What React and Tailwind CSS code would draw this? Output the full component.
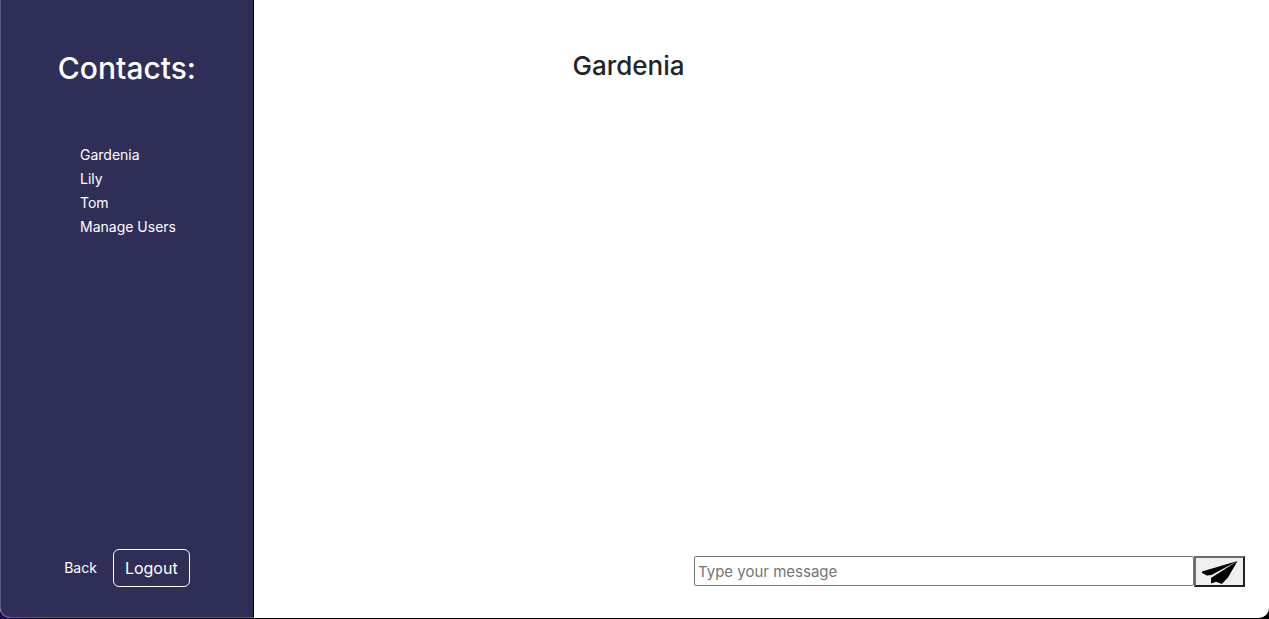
import React from "react";

const contacts = ["Gardenia", "Lily", "Tom", "Manage Users"];

function Sidebar() {
  return (
    <aside className="flex w-1/5 shrink-0 flex-col rounded-bl-[10px] border-r border-b border-l border-r-black border-b-[#5b5980] border-l-[#5b5980] bg-[#2f2e57] text-white">
      <h1 className="pt-12 text-center text-[30px] leading-10 font-medium">Contacts:</h1>
      <nav className="mt-[55px] pl-[79px]">
        <ul>
          {contacts.map((name) => (
            <li key={name} className="h-6 text-[14px] leading-6">
              <a href={"#" + name.toLowerCase().replace(" ", "-")}>{name}</a>
            </li>
          ))}
        </ul>
      </nav>
      <div className="mt-auto flex items-center justify-center gap-4 pb-[30px]">
        <a href="#back" className="text-[14px] leading-5">Back</a>
        <button type="button" className="h-[38px] rounded-md border border-white px-[11px] text-[16px] leading-6">
          Logout
        </button>
      </div>
    </aside>
  );
}

function MessageForm() {
  return (
    <form className="mt-auto flex items-start justify-end pr-6 pb-[31px]" onSubmit={(e) => e.preventDefault()}>
      <input
        type="text"
        aria-label="Message"
        placeholder="Type your message"
        className="h-[30px] w-[500px] rounded-xs border border-[#767676] bg-white px-[3px] text-[15px] placeholder:text-[#757575]"
      />
      <button
        type="submit"
        aria-label="Send"
        className="flex h-[31px] w-[51px] items-center justify-center border-2 border-t-[#6b6b6b] border-r-[#202020] border-b-[#202020] border-l-[#6b6b6b] bg-[#efefef]"
      >
        <svg viewBox="0 0 36 24" className="h-6 w-9" fill="#000" aria-hidden="true">
          <path d="M35.5 1L0 11.6V12.8L4.8 15.6L9.5 14.9Z" />
          <path d="M35.5 1L9 18V23.6L14.2 21.8L19.8 24L26 17.6Z" />
        </svg>
      </button>
    </form>
  );
}

export default function App() {
  return (
    <div className="h-screen bg-linear-to-r from-[#25005a] from-0% via-black via-5% to-black pb-px font-[Inter,sans-serif]">
      <div className="flex h-full overflow-hidden rounded-b-[10px] bg-white">
        <Sidebar />
        <main className="flex min-w-0 flex-1 flex-col">
          <h2 className="w-3/4 pt-12 pr-3 text-center text-[26px] leading-9 font-medium text-[#212529]">Gardenia</h2>
          <MessageForm />
        </main>
      </div>
    </div>
  );
}
